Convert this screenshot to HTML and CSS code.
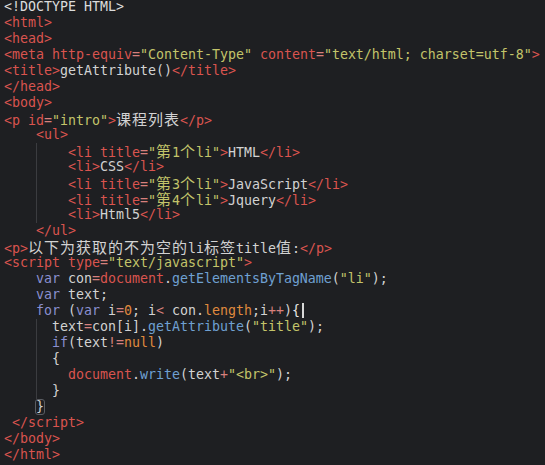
FILE: index.html
```html
<!DOCTYPE html>
<html>
<head>
<meta charset="utf-8">
<title>getAttribute()</title>
<link rel="stylesheet" href="styles.css">
</head>
<body>
<div class="code">
<div class="ln"><span class="p">&lt;!DOCTYPE HTML&gt;</span></div>
<div class="ln"><span class="t">&lt;html&gt;</span></div>
<div class="ln"><span class="t">&lt;head&gt;</span></div>
<div class="ln"><span class="t">&lt;meta</span> <span class="a">http-equiv</span><span class="o">=</span><span class="s">"Content-Type"</span> <span class="a">content</span><span class="o">=</span><span class="s">"text/html; charset=utf-8"</span><span class="t">&gt;</span></div>
<div class="ln"><span class="t">&lt;title&gt;</span>getAttribute()<span class="t">&lt;/title&gt;</span></div>
<div class="ln"><span class="t">&lt;/head&gt;</span></div>
<div class="ln"><span class="t">&lt;body&gt;</span></div>
<div class="ln"><span class="t">&lt;p</span> <span class="a">id</span><span class="o">=</span><span class="s">"intro"</span><span class="t">&gt;</span><span class="c">课程列表</span><span class="t">&lt;/p&gt;</span></div>
<div class="ln">    <span class="t">&lt;ul&gt;</span></div>
<div class="ln g">        <span class="t">&lt;li</span> <span class="a">title</span><span class="o">=</span><span class="s">"<span class="c">第</span>1<span class="c">个</span>li"</span><span class="t">&gt;</span>HTML<span class="t">&lt;/li&gt;</span></div>
<div class="ln g">        <span class="t">&lt;li&gt;</span>CSS<span class="t">&lt;/li&gt;</span></div>
<div class="ln g">        <span class="t">&lt;li</span> <span class="a">title</span><span class="o">=</span><span class="s">"<span class="c">第</span>3<span class="c">个</span>li"</span><span class="t">&gt;</span>JavaScript<span class="t">&lt;/li&gt;</span></div>
<div class="ln g">        <span class="t">&lt;li</span> <span class="a">title</span><span class="o">=</span><span class="s">"<span class="c">第</span>4<span class="c">个</span>li"</span><span class="t">&gt;</span>Jquery<span class="t">&lt;/li&gt;</span></div>
<div class="ln g">        <span class="t">&lt;li&gt;</span>Html5<span class="t">&lt;/li&gt;</span></div>
<div class="ln">    <span class="t">&lt;/ul&gt;</span></div>
<div class="ln"><span class="t">&lt;p&gt;</span><span class="c">以下为获取的不为空的</span>li<span class="c">标签</span>title<span class="c">值</span>:<span class="t">&lt;/p&gt;</span></div>
<div class="ln"><span class="t">&lt;script</span> <span class="a">type</span><span class="o">=</span><span class="s">"text/javascript"</span><span class="t">&gt;</span></div>
<div class="ln">    <span class="k">var</span> con<span class="o">=</span><span class="d">document</span>.<span class="f">getElementsByTagName</span>(<span class="s">"li"</span>);</div>
<div class="ln">    <span class="k">var</span> text;</div>
<div class="ln">    <span class="k">for</span> (<span class="k">var</span> i<span class="o">=</span><span class="n">0</span>; i<span class="o">&lt;</span> con.<span class="n">length</span>;i<span class="o">++</span>)<span class="br">{</span><span class="cur"></span></div>
<div class="ln g">      text<span class="o">=</span>con[i].<span class="f">getAttribute</span>(<span class="s">"title"</span>);</div>
<div class="ln g">      <span class="k">if</span>(text<span class="o">!=</span><span class="n">null</span>)</div>
<div class="ln g">      {</div>
<div class="ln g">        <span class="d">document</span>.<span class="f">write</span>(text<span class="o">+</span><span class="s">"&lt;br&gt;"</span>);</div>
<div class="ln g">      }</div>
<div class="ln">    <span class="mb">}</span></div>
<div class="ln"> <span class="t">&lt;/script&gt;</span></div>
<div class="ln"><span class="t">&lt;/body&gt;</span></div>
<div class="ln"><span class="t">&lt;/html&gt;</span></div>
</div>
</body>
</html>
```
FILE: styles.css
```css
html, body {
  margin: 0;
  padding: 0;
  background: #1e1f22;
}

.code {
  margin-top: -1px;
  font-family: "DejaVu Sans Mono", "Liberation Mono", monospace;
  font-size: 13.29px;
  color: #d2d2d2;
}

.ln {
  height: 16px;
  line-height: 16px;
  padding-left: 4px;
  white-space: pre;
}

.g {
  background: linear-gradient(#3b3c40, #3b3c40) no-repeat 36px 0 / 1px 100%;
}

.p { color: #dcdcdc; }
.t { color: #d9544f; }
.a { color: #d9544f; }
.o { color: #d7807c; }
.s { color: #c3c46a; }
.k { color: #8a8fd0; }
.f { color: #6fa0d2; }
.n { color: #e08a3e; }
.d { color: #d9544f; }

.c {
  font-family: "Noto Sans CJK SC", sans-serif;
  font-size: 15px;
  letter-spacing: 1px;
  line-height: 16px;
}

.s .c { color: #c3c46a; }

.br {
  color: #e6e6e6;
}

.cur {
  display: inline-block;
  width: 0;
  height: 15px;
  border-left: 2px solid #d8d8d8;
  margin-left: 2px;
  vertical-align: -3px;
}

.mb {
  display: inline-block;
  height: 14px;
  line-height: 14px;
  outline: 1px solid #5a5d63;
  border-radius: 2px;
}
```
